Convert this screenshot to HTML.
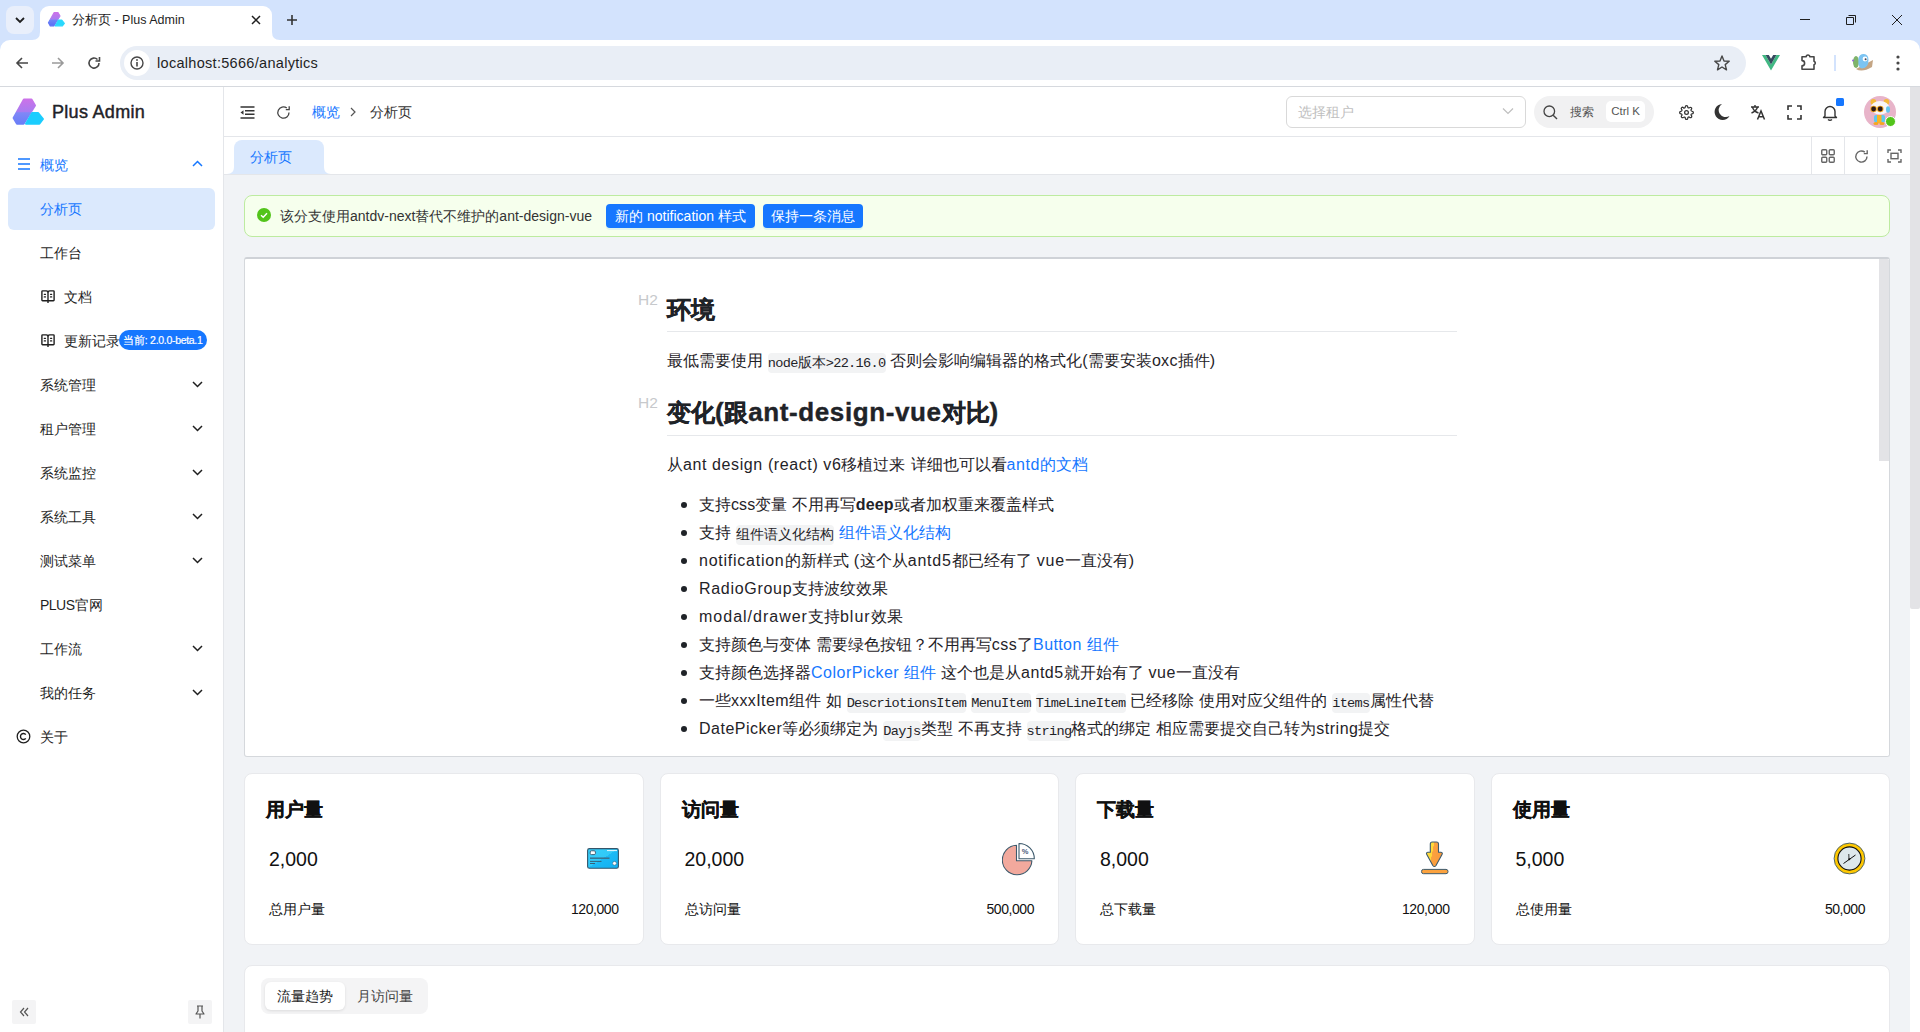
<!DOCTYPE html>
<html><head><meta charset="utf-8">
<style>
*{box-sizing:border-box;margin:0;padding:0}
html,body{width:1920px;height:1032px;overflow:hidden;background:#fff;font-family:"Liberation Sans",sans-serif;color:#1f1f1f}
.abs{position:absolute}
svg{display:block}
/* chrome */
#tabstrip{left:0;top:0;width:1920px;height:40px;background:#d3e3fd}
#toolbar{left:0;top:40px;width:1920px;height:46px;background:#fff}
#tbline{left:0;top:86px;width:1920px;height:1px;background:#d6d9de}
/* app */
#sidebar{left:0;top:87px;width:224px;height:945px;background:#fff;border-right:1px solid #e4e6ea}
#header{left:224px;top:87px;width:1686px;height:50px;background:#fff;border-bottom:1px solid #e4e6ea}
#tabs{left:224px;top:137px;width:1686px;height:38px;background:#fff;border-bottom:1px solid #e4e6ea}
#content{left:224px;top:175px;width:1686px;height:857px;background:#f1f3f6;overflow:hidden}
#pscroll{left:1910px;top:87px;width:10px;height:945px;background:#fff}
.menu{position:absolute;left:0;width:223px;height:44px;font-size:14px;color:#1f1f1f}
.menu .t{position:absolute;left:40px;top:1px;line-height:44px}
.chev{position:absolute;left:192px;top:18px}
.cd{font-family:"Liberation Mono",monospace;font-size:13.6px;letter-spacing:-0.68px;background:#f2f3f4;border-radius:4px;padding:2.5px 0}
</style></head><body>

<!-- ============ BROWSER CHROME ============ -->
<div id="tabstrip" class="abs"></div>
<div class="abs" style="left:6px;top:6px;width:28px;height:28px;border-radius:8px;background:#e9effb"></div>
<svg class="abs" style="left:14px;top:15px" width="12" height="10" viewBox="0 0 12 10"><path d="M2 3 L6 7 L10 3" fill="none" stroke="#1f1f1f" stroke-width="1.8"/></svg>
<!-- active tab -->
<div class="abs" style="left:40px;top:6px;width:232px;height:36px;background:#fff;border-radius:9px 9px 0 0"></div>
<svg class="abs" style="left:32px;top:32px" width="8" height="8"><path d="M0 8 Q8 8 8 0 L8 8 Z" fill="#fff"/></svg>
<svg class="abs" style="left:272px;top:32px" width="8" height="8"><path d="M8 8 Q0 8 0 0 L0 8 Z" fill="#fff"/></svg>
<svg class="abs" style="left:47px;top:11px" width="19" height="17" viewBox="-1 -1 35 30">
 <defs><linearGradient id="lg1" x1="0" y1="0" x2="0" y2="1"><stop offset="0" stop-color="#cb72e9"/><stop offset="0.5" stop-color="#a97cf0"/><stop offset="0.55" stop-color="#6f86f7"/><stop offset="1" stop-color="#5a6ef5"/></linearGradient></defs>
 <path d="M11.9 1.4 L19.5 1.4 L23 7.5 L11.6 25.7 L5 25.7 L1.6 20 Z" fill="url(#lg1)" stroke="url(#lg1)" stroke-width="2" stroke-linejoin="round"/>
 <path d="M14 25.7 L20.2 15 L26.2 15 L31 21 L27.4 25.7 Z" fill="#2ad8fd" stroke="#2ad8fd" stroke-width="2" stroke-linejoin="round"/>
</svg>
<div class="abs" style="left:72px;top:12px;font-size:12.5px;color:#1f1f1f;line-height:16px;white-space:nowrap">分析页 - Plus Admin</div>
<svg class="abs" style="left:250px;top:14px" width="12" height="12" viewBox="0 0 12 12"><path d="M2 2 L10 10 M10 2 L2 10" stroke="#1f1f1f" stroke-width="1.5"/></svg>
<svg class="abs" style="left:285px;top:13px" width="14" height="14" viewBox="0 0 14 14"><path d="M7 2 V12 M2 7 H12" stroke="#333" stroke-width="1.6"/></svg>
<!-- window controls -->
<svg class="abs" style="left:1799px;top:14px" width="12" height="12"><path d="M1 5.5 H11" stroke="#1f1f1f" stroke-width="1"/></svg>
<svg class="abs" style="left:1845px;top:14px" width="12" height="12"><path d="M1.5 3.5 H8.5 V10.5 H1.5 Z M3.5 1.5 H10.5 V8.5" fill="none" stroke="#1f1f1f" stroke-width="1"/></svg>
<svg class="abs" style="left:1891px;top:14px" width="12" height="12"><path d="M1 1 L11 11 M11 1 L1 11" stroke="#1f1f1f" stroke-width="1"/></svg>

<div id="toolbar" class="abs"></div>
<div class="abs" style="left:0;top:40px;width:10px;height:10px;background:#d3e3fd"><div style="width:10px;height:10px;background:#fff;border-top-left-radius:10px"></div></div>
<div class="abs" style="left:1910px;top:40px;width:10px;height:10px;background:#d3e3fd"><div style="width:10px;height:10px;background:#fff;border-top-right-radius:10px"></div></div>
<svg class="abs" style="left:14px;top:55px" width="16" height="16" viewBox="0 0 16 16"><path d="M14 8 H3 M8 3 L3 8 L8 13" fill="none" stroke="#474747" stroke-width="1.6"/></svg>
<svg class="abs" style="left:50px;top:55px" width="16" height="16" viewBox="0 0 16 16"><path d="M2 8 H13 M8 3 L13 8 L8 13" fill="none" stroke="#9a9a9a" stroke-width="1.6"/></svg>
<svg class="abs" style="left:86px;top:55px" width="16" height="16" viewBox="0 0 16 16"><path d="M13 8 A5 5 0 1 1 11.5 4.5" fill="none" stroke="#474747" stroke-width="1.6"/><path d="M13.5 2 V6 H9.5" fill="none" stroke="#474747" stroke-width="1.6"/></svg>
<div class="abs" style="left:120px;top:46px;width:1626px;height:34px;border-radius:17px;background:#e9eef6"></div>
<div class="abs" style="left:124px;top:50px;width:26px;height:26px;border-radius:13px;background:#fff"></div>
<svg class="abs" style="left:130px;top:56px" width="14" height="14" viewBox="0 0 14 14"><circle cx="7" cy="7" r="6" fill="none" stroke="#474747" stroke-width="1.4"/><path d="M7 6 V10.5" stroke="#474747" stroke-width="1.6"/><circle cx="7" cy="4" r="0.9" fill="#474747"/></svg>
<div class="abs" style="left:157px;top:54px;font-size:14.5px;color:#1f1f1f;line-height:18px;white-space:nowrap;letter-spacing:0.3px">localhost:5666/analytics</div>
<svg class="abs" style="left:1713px;top:54px" width="18" height="18" viewBox="0 0 18 18"><path d="M9 2 L11 7 L16.2 7.3 L12.2 10.6 L13.5 15.8 L9 13 L4.5 15.8 L5.8 10.6 L1.8 7.3 L7 7 Z" fill="none" stroke="#474747" stroke-width="1.4" stroke-linejoin="round"/></svg>
<svg class="abs" style="left:1762px;top:55px" width="18" height="16" viewBox="0 0 18 16"><path d="M0 0 H3.6 L9 9.4 L14.4 0 H18 L9 15.6 Z" fill="#41b883"/><path d="M3.6 0 H6.8 L9 3.8 L11.2 0 H14.4 L9 9.4 Z" fill="#35495e"/></svg>
<svg class="abs" style="left:1798px;top:51px" width="22" height="22" viewBox="0 0 22 22"><path d="M4 5.8 H8.2 A1.8 1.8 0 0 1 11.8 5.8 H16 V10.2 A1.9 1.9 0 0 1 16 13.8 V18.2 H4 V14.8 A2.6 2.6 0 0 0 4 9.6 Z" fill="none" stroke="#474747" stroke-width="1.6" stroke-linejoin="round"/></svg>
<div class="abs" style="left:1834px;top:55px;width:2px;height:16px;background:#d3e3fd"></div>
<svg class="abs" style="left:1850px;top:52px" width="26" height="22" viewBox="0 0 26 22">
 <path d="M6 17 Q12 21 22 15 L23 8 Z" fill="#c4a584"/>
 <ellipse cx="6" cy="10" rx="3" ry="6" fill="#7fb36a"/>
 <path d="M8.5 6 Q10 1.5 14 2 Q18.5 2.5 18.5 8 Q18.5 16 12 16.5 Q7.5 16.5 8.5 6 Z" fill="#7cc4f2"/>
 <circle cx="15" cy="7" r="2.4" fill="#fff"/><circle cx="15.6" cy="7.3" r="1" fill="#445"/>
 <circle cx="3" cy="8.5" r="0.9" fill="#8a5ad8"/>
</svg>
<svg class="abs" style="left:1892px;top:54px" width="12" height="18"><circle cx="6" cy="3" r="1.6" fill="#474747"/><circle cx="6" cy="9" r="1.6" fill="#474747"/><circle cx="6" cy="15" r="1.6" fill="#474747"/></svg>
<div id="tbline" class="abs"></div>

<!-- ============ SIDEBAR ============ -->
<div id="sidebar" class="abs">
 <svg class="abs" style="left:11px;top:10px" width="35" height="30" viewBox="-1 -1 35 30">
  <defs><linearGradient id="sg1" x1="0" y1="0" x2="0" y2="1"><stop offset="0" stop-color="#cb72e9"/><stop offset="0.5" stop-color="#a97cf0"/><stop offset="0.55" stop-color="#8088f7"/><stop offset="1" stop-color="#6a7ef7"/></linearGradient></defs>
  <path d="M11.9 1.4 L19.5 1.4 L23 7.5 L11.6 25.7 L5 25.7 L1.6 20 Z" fill="url(#sg1)" stroke="url(#sg1)" stroke-width="2" stroke-linejoin="round"/>
  <path d="M14 25.7 L20.2 15 L26.2 15 L31 21 L27.4 25.7 Z" fill="#1bcdfe" stroke="#1bcdfe" stroke-width="2" stroke-linejoin="round"/>
 </svg>
 <div class="abs" style="left:52px;top:13px;font-size:18px;font-weight:normal;-webkit-text-stroke:0.45px #1f2328;color:#1f2328;line-height:24px;white-space:nowrap;letter-spacing:0.3px">Plus Admin</div>

 <div class="menu" style="top:55px;color:#1677ff">
  <svg class="abs" style="left:18px;top:16px" width="13" height="12" viewBox="0 0 13 12"><path d="M0 1 H12 M0 6 H12 M0 11 H12" stroke="#1677ff" stroke-width="1.3"/></svg>
  <span class="t">概览</span>
  <svg class="chev" style="top:18px" width="11" height="8" viewBox="0 0 11 8"><path d="M1 6 L5.5 1.5 L10 6" fill="none" stroke="#1677ff" stroke-width="1.5"/></svg>
 </div>
 <div class="abs" style="left:8px;top:101px;width:207px;height:42px;border-radius:6px;background:#dbe9fd"></div>
 <div class="menu" style="top:99px;color:#1677ff"><span class="t">分析页</span></div>
 <div class="menu" style="top:143px"><span class="t">工作台</span></div>
 <div class="menu" style="top:187px">
  <svg class="abs" style="left:40px;top:15px" width="16" height="16" viewBox="0 0 16 16"><path d="M1.9 2.6 Q1.9 1.9 2.6 1.9 H6.2 Q7.4 1.9 8 2.9 Q8.6 1.9 9.8 1.9 H13.4 Q14.1 1.9 14.1 2.6 V11 Q14.1 11.7 13.4 11.7 H2.6 Q1.9 11.7 1.9 11 Z" fill="none" stroke="#1f1f1f" stroke-width="1.4" stroke-linejoin="round"/><path d="M8 2.9 V14" stroke="#1f1f1f" stroke-width="1.4"/><path d="M4.3 5.3 H5.5 M4.3 7.9 H5.5 M10.5 5.3 H11.7 M10.5 7.9 H11.7" stroke="#1f1f1f" stroke-width="1.3" stroke-linecap="round"/></svg>
  <span class="t" style="left:64px">文档</span></div>
 <div class="menu" style="top:231px">
  <svg class="abs" style="left:40px;top:15px" width="16" height="16" viewBox="0 0 16 16"><path d="M1.9 2.6 Q1.9 1.9 2.6 1.9 H6.2 Q7.4 1.9 8 2.9 Q8.6 1.9 9.8 1.9 H13.4 Q14.1 1.9 14.1 2.6 V11 Q14.1 11.7 13.4 11.7 H2.6 Q1.9 11.7 1.9 11 Z" fill="none" stroke="#1f1f1f" stroke-width="1.4" stroke-linejoin="round"/><path d="M8 2.9 V14" stroke="#1f1f1f" stroke-width="1.4"/><path d="M4.3 5.3 H5.5 M4.3 7.9 H5.5 M10.5 5.3 H11.7 M10.5 7.9 H11.7" stroke="#1f1f1f" stroke-width="1.3" stroke-linecap="round"/></svg>
  <span class="t" style="left:64px">更新记录</span>
  <div class="abs" style="left:119px;top:12px;width:88px;height:20px;border-radius:10px;background:#1677ff;color:#fff;font-size:10.5px;-webkit-text-stroke:0.2px #fff;line-height:20px;text-align:center;white-space:nowrap;letter-spacing:-0.3px">当前: 2.0.0-beta.1</div>
 </div>
  <div class="menu" style="top:275px"><span class="t">系统管理</span><svg class="chev" width="11" height="8" viewBox="0 0 11 8"><path d="M1 2 L5.5 6.5 L10 2" fill="none" stroke="#1f1f1f" stroke-width="1.5"/></svg></div>
 <div class="menu" style="top:319px"><span class="t">租户管理</span><svg class="chev" width="11" height="8" viewBox="0 0 11 8"><path d="M1 2 L5.5 6.5 L10 2" fill="none" stroke="#1f1f1f" stroke-width="1.5"/></svg></div>
 <div class="menu" style="top:363px"><span class="t">系统监控</span><svg class="chev" width="11" height="8" viewBox="0 0 11 8"><path d="M1 2 L5.5 6.5 L10 2" fill="none" stroke="#1f1f1f" stroke-width="1.5"/></svg></div>
 <div class="menu" style="top:407px"><span class="t">系统工具</span><svg class="chev" width="11" height="8" viewBox="0 0 11 8"><path d="M1 2 L5.5 6.5 L10 2" fill="none" stroke="#1f1f1f" stroke-width="1.5"/></svg></div>
 <div class="menu" style="top:451px"><span class="t">测试菜单</span><svg class="chev" width="11" height="8" viewBox="0 0 11 8"><path d="M1 2 L5.5 6.5 L10 2" fill="none" stroke="#1f1f1f" stroke-width="1.5"/></svg></div>
 <div class="menu" style="top:495px"><span class="t"><span style="letter-spacing:-0.5px">PLUS</span>官网</span></div>
 <div class="menu" style="top:539px"><span class="t">工作流</span><svg class="chev" width="11" height="8" viewBox="0 0 11 8"><path d="M1 2 L5.5 6.5 L10 2" fill="none" stroke="#1f1f1f" stroke-width="1.5"/></svg></div>
 <div class="menu" style="top:583px"><span class="t">我的任务</span><svg class="chev" width="11" height="8" viewBox="0 0 11 8"><path d="M1 2 L5.5 6.5 L10 2" fill="none" stroke="#1f1f1f" stroke-width="1.5"/></svg></div>

 <div class="menu" style="top:627px">
  <svg class="abs" style="left:16px;top:15px" width="15" height="15" viewBox="0 0 15 15"><circle cx="7.5" cy="7.5" r="6.3" fill="none" stroke="#1f1f1f" stroke-width="1.3"/><path d="M9.8 5.6 A3 3 0 1 0 9.8 9.4" fill="none" stroke="#1f1f1f" stroke-width="1.4"/></svg>
  <span class="t">关于</span></div>
 <div class="abs" style="left:12px;top:913px;width:24px;height:24px;border-radius:2px;background:#f4f4f5"></div>
 <svg class="abs" style="left:18px;top:919px" width="12" height="12" viewBox="0 0 12 12"><path d="M6 2 L2.5 6 L6 10 M10 2 L6.5 6 L10 10" fill="none" stroke="#555" stroke-width="1.2"/></svg>
 <div class="abs" style="left:188px;top:913px;width:24px;height:24px;border-radius:2px;background:#f4f4f5"></div>
 <svg class="abs" style="left:194px;top:918px" width="12" height="14" viewBox="0 0 12 14"><path d="M3 1 H9 M4 1.5 V6 L2 9 H10 L8 6 V1.5 M6 9 V13.5" fill="none" stroke="#555" stroke-width="1.2" stroke-linejoin="round"/></svg>
</div>

<!-- ============ HEADER ============ -->
<div id="header" class="abs">
 <svg class="abs" style="left:16px;top:19px" width="15" height="13" viewBox="0 0 15 13"><path d="M0.5 1 H14.5 M5 4.8 H14.5 M5 8.2 H14.5 M0.5 12 H14.5" stroke="#333" stroke-width="1.6"/><path d="M0.5 6.5 L3.5 4.3 V8.7 Z" fill="#333"/></svg>
 <svg class="abs" style="left:52px;top:18px" width="15" height="15" viewBox="0 0 15 15"><path d="M13 7.5 A5.6 5.6 0 1 1 10.8 3.1" fill="none" stroke="#444" stroke-width="1.3"/><path d="M13.2 1.2 V4.6 H9.8" fill="none" stroke="#444" stroke-width="1.3"/></svg>
 <div class="abs" style="left:88px;top:16px;font-size:14px;line-height:18px;color:#1677ff;white-space:nowrap">概览</div>
 <svg class="abs" style="left:125px;top:20px" width="8" height="10" viewBox="0 0 8 10"><path d="M2 1 L6 5 L2 9" fill="none" stroke="#555" stroke-width="1.2"/></svg>
 <div class="abs" style="left:146px;top:16px;font-size:14px;line-height:18px;color:#333;white-space:nowrap">分析页</div>

 <div class="abs" style="left:1062px;top:9px;width:240px;height:32px;border:1px solid #d9d9d9;border-radius:6px;background:#fff"></div>
 <div class="abs" style="left:1074px;top:16px;font-size:14px;line-height:18px;color:#bfbfbf;white-space:nowrap">选择租户</div>
 <svg class="abs" style="left:1278px;top:20px" width="12" height="8" viewBox="0 0 12 8"><path d="M1 1.5 L6 6.5 L11 1.5" fill="none" stroke="#bfbfbf" stroke-width="1.2"/></svg>

 <div class="abs" style="left:1310px;top:9px;width:120px;height:32px;border-radius:16px;background:#f1f1f2"></div>
 <svg class="abs" style="left:1319px;top:18px" width="15" height="15" viewBox="0 0 15 15"><circle cx="6.3" cy="6.3" r="5.3" fill="none" stroke="#444" stroke-width="1.3"/><path d="M10.2 10.2 L14 14" stroke="#444" stroke-width="1.4"/></svg>
 <div class="abs" style="left:1346px;top:17px;font-size:12px;line-height:16px;color:#555;white-space:nowrap">搜索</div>
 <div class="abs" style="left:1382px;top:14px;width:39px;height:21px;border-radius:5px;background:#fff;font-size:11.5px;line-height:21px;color:#555;text-align:center;white-space:nowrap">Ctrl K</div>

 <svg class="abs" style="left:1455px;top:18px" width="15" height="15" viewBox="0 0 24 24"><path d="M12 15a3 3 0 1 0 0-6 3 3 0 0 0 0 6Z" fill="none" stroke="#333" stroke-width="2"/><path d="M19.4 15a1.65 1.65 0 0 0 .33 1.82l.06.06a2 2 0 1 1-2.83 2.83l-.06-.06a1.65 1.65 0 0 0-1.82-.33 1.65 1.65 0 0 0-1 1.51V21a2 2 0 1 1-4 0v-.09A1.65 1.65 0 0 0 9 19.4a1.65 1.65 0 0 0-1.82.33l-.06.06a2 2 0 1 1-2.83-2.83l.06-.06a1.65 1.65 0 0 0 .33-1.82 1.65 1.65 0 0 0-1.51-1H3a2 2 0 1 1 0-4h.09A1.65 1.65 0 0 0 4.6 9a1.65 1.65 0 0 0-.33-1.82l-.06-.06a2 2 0 1 1 2.830-2.83l.06.06a1.65 1.65 0 0 0 1.82.33H9a1.65 1.65 0 0 0 1-1.51V3a2 2 0 1 1 4 0v.09a1.65 1.65 0 0 0 1 1.51 1.65 1.65 0 0 0 1.82-.33l.06-.06a2 2 0 1 1 2.83 2.83l-.06.06a1.65 1.65 0 0 0-.33 1.82V9a1.65 1.65 0 0 0 1.51 1H21a2 2 0 1 1 0 4h-.09a1.65 1.65 0 0 0-1.51 1Z" fill="none" stroke="#333" stroke-width="2" stroke-linejoin="round"/></svg>
 <svg class="abs" style="left:1489px;top:16px" width="17" height="18" viewBox="0 0 17 18"><path d="M9 1 A8 8 0 1 0 16.5 13 A7 7 0 0 1 9 1 Z" fill="#333"/></svg>
 <svg class="abs" style="left:1526px;top:17px" width="16" height="16" viewBox="0 0 16 16"><path d="M1 3 H9 M5 1 V3 M2.5 3 Q3.5 7.5 8.5 9 M7.5 3 Q6.5 7 1.5 9" fill="none" stroke="#333" stroke-width="1.4"/><path d="M7.5 15.5 L11 7 L14.5 15.5 M8.6 12.8 H13.4" fill="none" stroke="#333" stroke-width="1.5"/></svg>
 <svg class="abs" style="left:1563px;top:18px" width="15" height="15" viewBox="0 0 15 15"><path d="M1 5 V1 H5 M10 1 H14 V5 M14 10 V14 H10 M5 14 H1 V10" fill="none" stroke="#333" stroke-width="1.6"/></svg>
 <svg class="abs" style="left:1598px;top:17px" width="16" height="17" viewBox="0 0 16 17"><path d="M3 12 V7.5 A5 5 0 0 1 13 7.5 V12 L14.5 13.5 H1.5 Z" fill="none" stroke="#333" stroke-width="1.4" stroke-linejoin="round"/><path d="M6 15.5 Q8 17 10 15.5" fill="none" stroke="#333" stroke-width="1.4"/></svg>
 <div class="abs" style="left:1612px;top:11px;width:8px;height:8px;border-radius:1.5px;background:#1677ff"></div>

 <svg class="abs" style="left:1640px;top:9px" width="32" height="32" viewBox="0 0 32 32">
  <defs><clipPath id="avc"><circle cx="16" cy="16" r="16"/></clipPath></defs>
  <g clip-path="url(#avc)">
  <rect width="32" height="32" fill="#e8b4c9"/>
  <circle cx="9.4" cy="6" r="2.9" fill="#f4b93a"/><circle cx="22.4" cy="6" r="2.9" fill="#f4b93a"/>
  <ellipse cx="16" cy="11.8" rx="9.3" ry="6.8" fill="#f8f6f8"/>
  <rect x="10" y="19" width="11" height="7.5" rx="2" fill="#5ec8ef"/>
  <rect x="13" y="19" width="4.5" height="8" fill="#f6b428"/>
  <ellipse cx="12" cy="27.5" rx="2.6" ry="1.6" fill="#f5a623"/><ellipse cx="18" cy="27.5" rx="2.6" ry="1.6" fill="#f5a623"/>
  <circle cx="9.6" cy="13" r="3.3" fill="#f0a726"/><circle cx="9.6" cy="13" r="2.4" fill="#2a1a1a"/>
  <circle cx="16.2" cy="13" r="3.3" fill="#f0a726"/><circle cx="16.2" cy="13" r="2.4" fill="#2a1a1a"/>
  <ellipse cx="24" cy="13.5" rx="2" ry="3.2" fill="#62c6ee"/>
  </g>
 </svg>
 <div class="abs" style="left:1660.5px;top:29px;width:11px;height:11px;border-radius:6px;background:#52c41a;border:1.5px solid #fff;box-sizing:border-box"></div>
</div>
<div id="tabs" class="abs">
 <div class="abs" style="left:10px;top:3px;width:90px;height:34px;border-radius:8px 8px 0 0;background:#dbe9fd"></div>
 <svg class="abs" style="left:3px;top:30px" width="7" height="7"><path d="M0 7 Q7 7 7 0 V7 Z" fill="#dbe9fd"/></svg>
 <svg class="abs" style="left:100px;top:30px" width="7" height="7"><path d="M7 7 Q0 7 0 0 V7 Z" fill="#dbe9fd"/></svg>
 <div class="abs" style="left:26px;top:11px;font-size:14px;line-height:18px;color:#1677ff;white-space:nowrap">分析页</div>
 <div class="abs" style="left:1587px;top:0;width:1px;height:37px;background:#e4e6ea"></div>
 <div class="abs" style="left:1620px;top:0;width:1px;height:37px;background:#e4e6ea"></div>
 <div class="abs" style="left:1653px;top:0;width:1px;height:37px;background:#e4e6ea"></div>
 <svg class="abs" style="left:1597px;top:12px" width="14" height="14" viewBox="0 0 14 14"><rect x="0.75" y="0.75" width="5" height="5" rx="1" fill="none" stroke="#666" stroke-width="1.4"/><rect x="8.25" y="0.75" width="5" height="5" rx="1" fill="none" stroke="#666" stroke-width="1.4"/><rect x="0.75" y="8.25" width="5" height="5" rx="1" fill="none" stroke="#666" stroke-width="1.4"/><rect x="8.25" y="8.25" width="5" height="5" rx="1" fill="none" stroke="#666" stroke-width="1.4"/></svg>
 <svg class="abs" style="left:1630px;top:12px" width="15" height="15" viewBox="0 0 15 15"><path d="M13 7.5 A5.6 5.6 0 1 1 10.8 3.1" fill="none" stroke="#666" stroke-width="1.4"/><path d="M13.2 1.2 V4.6 H9.8" fill="none" stroke="#666" stroke-width="1.4"/></svg>
 <svg class="abs" style="left:1663px;top:12px" width="15" height="14" viewBox="0 0 15 14"><path d="M1 4 V1 H4 M11 1 H14 V4 M14 10 V13 H11 M4 13 H1 V10" fill="none" stroke="#666" stroke-width="1.4"/><rect x="4" y="4.3" width="7" height="5.4" fill="none" stroke="#666" stroke-width="1.4"/></svg>
</div>
<div id="content" class="abs">
 <!-- alert -->
 <div class="abs" style="left:20px;top:20px;width:1646px;height:42px;border:1px solid #bdeba0;border-radius:8px;background:#f6ffed"></div>
 <svg class="abs" style="left:33px;top:33px" width="14" height="14" viewBox="0 0 14 14"><circle cx="7" cy="7" r="7" fill="#52c41a"/><path d="M4 7.2 L6.2 9.3 L10 5.2" fill="none" stroke="#fff" stroke-width="1.4"/></svg>
 <div class="abs" style="left:56px;top:32px;font-size:14px;line-height:18px;color:#333;white-space:nowrap">该分支使用antdv-next替代不维护的ant-design-vue</div>
 <div class="abs" style="left:382px;top:29px;width:149px;height:24px;border-radius:4px;background:#1677ff;box-shadow:0 2px 0 rgba(5,145,255,0.1);color:#fff;font-size:14px;line-height:24px;text-align:center;white-space:nowrap">新的 notification 样式</div>
 <div class="abs" style="left:539px;top:29px;width:100px;height:24px;border-radius:4px;background:#1677ff;box-shadow:0 2px 0 rgba(5,145,255,0.1);color:#fff;font-size:14px;line-height:24px;text-align:center;white-space:nowrap">保持一条消息</div>

 <!-- markdown card -->
 <div class="abs" style="left:20px;top:82px;width:1646px;height:500px;background:#fff;border:1px solid #d5d8dc;border-top:2px solid #cfd2d7;border-radius:3px;overflow:hidden">
  <div class="abs" style="right:0;top:0;width:10px;height:498px;background:#fff"></div>
  <div class="abs" style="right:0;top:0;width:10px;height:202px;background:#e3e3e6"></div>
<!--MD-->
<div id="md" class="abs" style="left:422px;top:0;width:790px;color:#1f2328">
 <div class="abs" style="left:-29px;top:33px;font-size:15.5px;line-height:16px;color:#c7c9cc">H2</div>
 <div class="abs" style="left:0;top:33px;font-size:24px;font-weight:bold;line-height:36px;white-space:nowrap;-webkit-text-stroke:0.4px #1f2328">环境</div>
 <div class="abs" style="left:0;top:72px;width:790px;height:1px;background:#e6e8eb"></div>
 <div class="abs" style="left:0;top:91px;font-size:16px;line-height:22px;white-space:nowrap">最低需要使用<span style="letter-spacing:0.3px"> </span><span class="cd">node<span style="letter-spacing:0">版本</span>&gt;22.16.0</span><span style="letter-spacing:0.3px"> </span>否则会影响编辑器的格式化<span style="letter-spacing:0.3px">(</span>需要安装<span style="letter-spacing:0.3px">oxc</span>插件<span style="letter-spacing:0.3px">)</span></div>
 <div class="abs" style="left:-29px;top:136px;font-size:15.5px;line-height:16px;color:#c7c9cc">H2</div>
 <div class="abs" style="left:0;top:135px;font-size:24px;font-weight:bold;line-height:36px;white-space:nowrap;-webkit-text-stroke:0.4px #1f2328">变化<span style="font-size:26px;letter-spacing:0.6px">(</span>跟<span style="font-size:26px;letter-spacing:0.6px">ant-design-vue</span>对比<span style="font-size:26px">)</span></div>
 <div class="abs" style="left:0;top:176px;width:790px;height:1px;background:#e6e8eb"></div>
 <div class="abs" style="left:0;top:195px;font-size:16px;line-height:22px;white-space:nowrap">从<span style="letter-spacing:0.6px">ant design (react) v6</span>移植过来<span style="letter-spacing:0.6px"> </span>详细也可以看<span style="color:#1677ff"><span style="letter-spacing:0.6px">antd</span>的文档</span></div>
 <div class="abs" style="left:14px;top:243px;width:6px;height:6px;border-radius:3px;background:#1f2328"></div>
 <div class="abs" style="left:32px;top:232px;font-size:16px;line-height:28px;white-space:nowrap">支持<span style="letter-spacing:0.1px">css</span>变量<span style="letter-spacing:0.1px"> </span>不用再写<b><span style="letter-spacing:0.1px">deep</span></b>或者加权重来覆盖样式</div>
 <div class="abs" style="left:14px;top:271px;width:6px;height:6px;border-radius:3px;background:#1f2328"></div>
 <div class="abs" style="left:32px;top:260px;font-size:16px;line-height:28px;white-space:nowrap">支持<span style="letter-spacing:0.5px"> </span><span class="cd"><span style="letter-spacing:0">组件语义化结构</span></span><span style="letter-spacing:0.5px"> </span><span style="color:#1677ff">组件语义化结构</span></div>
 <div class="abs" style="left:14px;top:299px;width:6px;height:6px;border-radius:3px;background:#1f2328"></div>
 <div class="abs" style="left:32px;top:288px;font-size:16px;line-height:28px;white-space:nowrap"><span style="letter-spacing:0.75px">notification</span>的新样式<span style="letter-spacing:0.75px"> (</span>这个从<span style="letter-spacing:0.75px">antd5</span>都已经有了<span style="letter-spacing:0.75px"> vue</span>一直没有<span style="letter-spacing:0.75px">)</span></div>
 <div class="abs" style="left:14px;top:327px;width:6px;height:6px;border-radius:3px;background:#1f2328"></div>
 <div class="abs" style="left:32px;top:316px;font-size:16px;line-height:28px;white-space:nowrap"><span style="letter-spacing:0.7px">RadioGroup</span>支持波纹效果</div>
 <div class="abs" style="left:14px;top:355px;width:6px;height:6px;border-radius:3px;background:#1f2328"></div>
 <div class="abs" style="left:32px;top:344px;font-size:16px;line-height:28px;white-space:nowrap"><span style="letter-spacing:1.0px">modal/drawer</span>支持<span style="letter-spacing:1.0px">blur</span>效果</div>
 <div class="abs" style="left:14px;top:383px;width:6px;height:6px;border-radius:3px;background:#1f2328"></div>
 <div class="abs" style="left:32px;top:372px;font-size:16px;line-height:28px;white-space:nowrap">支持颜色与变体<span style="letter-spacing:0.4px"> </span>需要绿色按钮？不用再写<span style="letter-spacing:0.4px">css</span>了<span style="color:#1677ff"><span style="letter-spacing:0.4px">Button </span>组件</span></div>
 <div class="abs" style="left:14px;top:411px;width:6px;height:6px;border-radius:3px;background:#1f2328"></div>
 <div class="abs" style="left:32px;top:400px;font-size:16px;line-height:28px;white-space:nowrap">支持颜色选择器<span style="color:#1677ff"><span style="letter-spacing:0.5px">ColorPicker </span>组件</span><span style="letter-spacing:0.5px"> </span>这个也是从<span style="letter-spacing:0.5px">antd5</span>就开始有了<span style="letter-spacing:0.5px"> vue</span>一直没有</div>
 <div class="abs" style="left:14px;top:439px;width:6px;height:6px;border-radius:3px;background:#1f2328"></div>
 <div class="abs" style="left:32px;top:428px;font-size:16px;line-height:28px;white-space:nowrap">一些<span style="letter-spacing:0.4px">xxxItem</span>组件<span style="letter-spacing:0.4px"> </span>如<span style="letter-spacing:0.4px"> </span><span class="cd">DescriotionsItem</span><span style="letter-spacing:0.4px"> </span><span class="cd">MenuItem</span><span style="letter-spacing:0.4px"> </span><span class="cd">TimeLineItem</span><span style="letter-spacing:0.4px"> </span>已经移除<span style="letter-spacing:0.4px"> </span>使用对应父组件的<span style="letter-spacing:0.4px"> </span><span class="cd">items</span>属性代替</div>
 <div class="abs" style="left:14px;top:467px;width:6px;height:6px;border-radius:3px;background:#1f2328"></div>
 <div class="abs" style="left:32px;top:456px;font-size:16px;line-height:28px;white-space:nowrap"><span style="letter-spacing:0.5px">DatePicker</span>等必须绑定为<span style="letter-spacing:0.5px"> </span><span class="cd">Dayjs</span>类型<span style="letter-spacing:0.5px"> </span>不再支持<span style="letter-spacing:0.5px"> </span><span class="cd">string</span>格式的绑定<span style="letter-spacing:0.5px"> </span>相应需要提交自己转为<span style="letter-spacing:0.5px">string</span>提交</div>
</div>
<!--/MD-->
 </div>

  <div class="abs" style="left:20.0px;top:598px;width:399.5px;height:172px;background:#fff;border:1px solid #e8e9ec;border-radius:8px">
  <div class="abs" style="left:21px;top:23px;font-size:19px;font-weight:bold;line-height:26px;color:#111;white-space:nowrap;-webkit-text-stroke:0.3px #111">用户量</div>
  <div class="abs" style="left:24px;top:72px;font-size:19.5px;line-height:26px;color:#111;white-space:nowrap">2,000</div>
  <svg class="abs" style="right:24px;top:74px" width="32" height="21" viewBox="0 0 32 21"><defs><linearGradient id="cg" x1="0" y1="0" x2="1" y2="1"><stop offset="0" stop-color="#37d0fb"/><stop offset="0.5" stop-color="#30c9f8"/><stop offset="0.5" stop-color="#1bbaf5"/><stop offset="1" stop-color="#12b0f2"/></linearGradient></defs><rect x="0.6" y="0.6" width="30.8" height="19.6" rx="1.8" fill="url(#cg)" stroke="#35556a" stroke-width="1.1"/><rect x="3.2" y="2.8" width="5.2" height="3.8" rx="1.2" fill="#fff" stroke="#35556a" stroke-width="0.9"/><path d="M3 10.2 H22.5" stroke="#3a6f8c" stroke-width="1.5"/><path d="M3 13.4 H14.5 M3 15.5 H8" stroke="#35556a" stroke-width="0.9"/><path d="M20 2.6 H30" stroke="#fff" stroke-width="0.9"/><circle cx="27.5" cy="15.3" r="1.9" fill="#fff" stroke="#35556a" stroke-width="0.5"/></svg>
  <div class="abs" style="left:24px;top:125px;font-size:14px;line-height:20px;color:#111;white-space:nowrap">总用户量</div>
  <div class="abs" style="right:24px;top:125px;font-size:14px;line-height:20px;color:#111;white-space:nowrap;letter-spacing:-0.45px">120,000</div>
 </div>
 <div class="abs" style="left:435.5px;top:598px;width:399.5px;height:172px;background:#fff;border:1px solid #e8e9ec;border-radius:8px">
  <div class="abs" style="left:21px;top:23px;font-size:19px;font-weight:bold;line-height:26px;color:#111;white-space:nowrap;-webkit-text-stroke:0.3px #111">访问量</div>
  <div class="abs" style="left:24px;top:72px;font-size:19.5px;line-height:26px;color:#111;white-space:nowrap">20,000</div>
  <svg class="abs" style="right:22.5px;top:68px" width="34" height="34" viewBox="0 0 34 34"><path d="M14.5 3.2 A14.8 14.8 0 1 0 29.9 18.8 L14.5 18.8 Z" fill="#f2a99d" stroke="#3d5a6c" stroke-width="1.1" stroke-linejoin="round"/><path d="M17 1.5 A15.3 15.3 0 0 1 32.3 16.8 L17 16.8 Z" fill="#fff" stroke="#3d5a6c" stroke-width="1.1" stroke-linejoin="round"/><text x="19.8" y="11.8" font-size="7.5" font-weight="bold" fill="#4a5a7a" font-family="Liberation Sans">%</text></svg>
  <div class="abs" style="left:24px;top:125px;font-size:14px;line-height:20px;color:#111;white-space:nowrap">总访问量</div>
  <div class="abs" style="right:24px;top:125px;font-size:14px;line-height:20px;color:#111;white-space:nowrap;letter-spacing:-0.45px">500,000</div>
 </div>
 <div class="abs" style="left:851.0px;top:598px;width:399.5px;height:172px;background:#fff;border:1px solid #e8e9ec;border-radius:8px">
  <div class="abs" style="left:21px;top:23px;font-size:19px;font-weight:bold;line-height:26px;color:#111;white-space:nowrap;-webkit-text-stroke:0.3px #111">下载量</div>
  <div class="abs" style="left:24px;top:72px;font-size:19.5px;line-height:26px;color:#111;white-space:nowrap">8,000</div>
  <svg class="abs" style="right:24px;top:67px" width="30" height="34" viewBox="0 0 30 34"><defs><linearGradient id="dg" x1="0" y1="0" x2="1" y2="0.3"><stop offset="0" stop-color="#ffd93a"/><stop offset="0.45" stop-color="#ffd93a"/><stop offset="0.46" stop-color="#fba23f"/><stop offset="1" stop-color="#fb9a3c"/></linearGradient></defs><path d="M10.3 3 Q10.3 1 12.3 1 H16.5 Q18.5 1 18.5 3 V11.3 H21 Q23 11.7 22 13.5 L16 24.5 Q14.4 26.6 12.8 24.5 L6.8 13.5 Q5.8 11.7 7.8 11.3 H10.3 Z" fill="url(#dg)" stroke="#3d5a6c" stroke-width="1.1" stroke-linejoin="round"/><rect x="1.5" y="28.4" width="26.5" height="4.3" rx="2" fill="#fba23f" stroke="#3d5a6c" stroke-width="1"/></svg>
  <div class="abs" style="left:24px;top:125px;font-size:14px;line-height:20px;color:#111;white-space:nowrap">总下载量</div>
  <div class="abs" style="right:24px;top:125px;font-size:14px;line-height:20px;color:#111;white-space:nowrap;letter-spacing:-0.45px">120,000</div>
 </div>
 <div class="abs" style="left:1266.5px;top:598px;width:399.5px;height:172px;background:#fff;border:1px solid #e8e9ec;border-radius:8px">
  <div class="abs" style="left:21px;top:23px;font-size:19px;font-weight:bold;line-height:26px;color:#111;white-space:nowrap;-webkit-text-stroke:0.3px #111">使用量</div>
  <div class="abs" style="left:24px;top:72px;font-size:19.5px;line-height:26px;color:#111;white-space:nowrap">5,000</div>
  <svg class="abs" style="right:23px;top:68px" width="33" height="33" viewBox="0 0 33 33"><circle cx="16.5" cy="16.5" r="15.4" fill="#ffc800" stroke="#3d5a6c" stroke-width="0.9"/><circle cx="16.5" cy="16.5" r="11.6" fill="#dde8ec" stroke="#111" stroke-width="1.1"/><path d="M10.5 21.5 L22.5 13" stroke="#111" stroke-width="1"/><path d="M16 18 L15.8 12" stroke="#222" stroke-width="0.9"/><circle cx="16.3" cy="17.2" r="1" fill="#111"/></svg>
  <div class="abs" style="left:24px;top:125px;font-size:14px;line-height:20px;color:#111;white-space:nowrap">总使用量</div>
  <div class="abs" style="right:24px;top:125px;font-size:14px;line-height:20px;color:#111;white-space:nowrap;letter-spacing:-0.45px">50,000</div>
 </div>


 <!-- bottom card -->
 <div class="abs" style="left:20px;top:790px;width:1646px;height:100px;background:#fff;border:1px solid #e8e9ec;border-radius:8px"></div>
 <div class="abs" style="left:37px;top:803px;width:167px;height:36px;border-radius:8px;background:#f4f4f5"></div>
 <div class="abs" style="left:41px;top:807px;width:80px;height:28px;border-radius:6px;background:#fff;box-shadow:0 1px 3px rgba(0,0,0,0.1)"></div>
 <div class="abs" style="left:53px;top:812px;font-size:14px;line-height:18px;color:#1f1f1f;white-space:nowrap">流量趋势</div>
 <div class="abs" style="left:133px;top:812px;font-size:14px;line-height:18px;color:#444;white-space:nowrap">月访问量</div>
</div>
<div id="pscroll" class="abs"><div style="width:10px;height:522px;background:#e3e3e6;border-radius:0 0 2px 2px"></div></div>

</body></html>
